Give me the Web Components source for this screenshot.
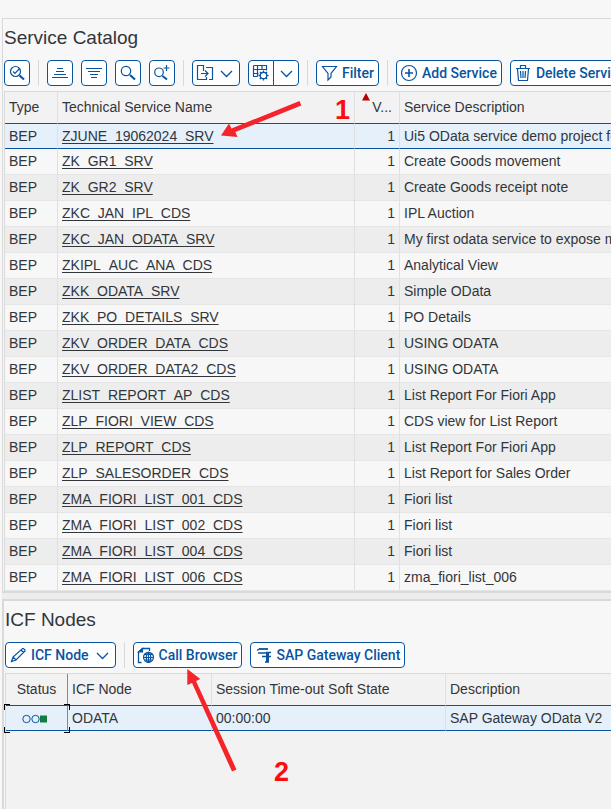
<!DOCTYPE html>
<html lang="en">
<head>
<meta charset="utf-8">
<title>Service Catalog</title>
<style>
html, body { margin: 0; height: 100%; }
body { font: 14px/20px "Liberation Sans", Arial, sans-serif; color: #32363a; background: #f7f7f7; overflow: hidden; }
</style>
</head>
<body>
<service-page></service-page>
<script>
const icons = {
  check: '<circle cx="11.5" cy="11.5" r="5"/><path d="M9 11.5l2 2 4.500-5"/><path stroke-width="2.2" d="M15.500 15.500l4.500 4"/>',
  asc: '<path d="M10 8.500h6M9 11.500h8M7 14.500h12M5 17.500h16"/>',
  desc: '<path d="M5 8.500h16M7 11.500h12M9 14.500h8M10 17.500h6"/>',
  find: '<circle cx="11" cy="11" r="4.700"/><path stroke-width="2.200" d="M15 15l5 4.500"/>',
  findmore: '<circle cx="10" cy="12.300" r="4.300"/><path stroke-width="2" d="M13.500 16l4.500 3.500"/><path d="M17.500 5v6M14.500 8h6"/>',
  export: '<path d="M11.500 8V5.500h-6v14h9V17M14 7.500h6.500v12H17M11.500 8v3M9 13.500h7M13 10.500l3 3-3 3"/>',
  grid: '<path d="M5.500 5.500h13v5M5.500 5.500v11h4M5.500 9.500h13M5.500 13.500h5M9.500 5.500v11M14 5.500v4"/><circle cx="15.500" cy="15.500" r="3.200"/><path stroke-width="1.400" d="M15.500 10.500v2M15.500 18.500v2M10.500 15.500h2M18.500 15.500h2M12 12l1.400 1.400M17.600 17.600L19 19M19 12l-1.400 1.400M13.400 17.600L12 19"/>',
  filter: '<path d="M6.500 6.500h14l-5.500 7v3.500l-3 3v-6.500z"/>',
  add: '<circle cx="13" cy="13" r="7.500"/><path stroke-width="1.600" d="M13 9v8M9 13h8"/>',
  trash: '<path d="M6 8.500h14M10.500 8V5.500h5V8M7.500 9l1 11.500h9l1-11.500M10.500 11l.5 7M13 11v7M15.500 11l-.5 7"/>',
  edit: '<path d="M6.500 19.500l1.500-4.500 9.500-8.500h1l1.500 1.500v1l-9 9zM8 15l3 3M16 8l2.500 2.500"/>',
  browser: '<path stroke-width="1.300" d="M8.500 20.500h-3V10l4-3.500h7V9"/><path fill="currentColor" d="M5.500 10l4-3.500v3.500z"/><circle cx="15.500" cy="15.300" r="5"/><ellipse cx="15.500" cy="15.300" rx="2.200" ry="5"/><path d="M10.500 15.500h10M11.500 12.500h8M11.500 18h8M15.500 10.500v10"/>',
  gateway: '<path stroke-width="1.800" d="M9 7h9"/><path stroke-width="1.400" d="M7 8.500l3-2M8 11h11M12 14.500h5M18 14.500h3"/><path stroke-width="3" d="M17.500 10v10"/><path stroke-width="1.400" d="M15 20h4M16 10.500h5"/>'
};

function define(name, css, html) {
  const t = document.createElement('template');
  customElements.define(name, class extends HTMLElement {
    connectedCallback() {
      if (this.shadowRoot) return;
      t.innerHTML = `<style>*{box-sizing:border-box}${css}</style>${typeof html === 'function' ? html(this) : html}`;
      this.attachShadow({ mode: 'open' }).append(t.content.cloneNode(true));
    }
  });
}

const chevron = '<svg class="chev" width="13" height="26" viewBox="0 0 13 26"><path d="M1 11l5.500 5.500L12 11"/></svg>';

define('tool-button', `
  :host { display: flex; flex: none; }
  button { display: flex; align-items: center; height: 26px; padding: 0; border: 1px solid #0854a0; border-radius: 4px;
    background: #fff; color: #0854a0; font: 500 14px/24px Roboto, sans-serif; white-space: nowrap; cursor: pointer; }
  svg { flex: none; fill: none; stroke: currentColor; stroke-width: 1.2; margin: -1px; }
  .text { padding: 0 4px 0 1px; }
  .menu { padding-right: 6px; }
  .chev { margin: -1px 0 -1px 3px; stroke-width: 1.3; }
  .first { border-radius: 4px 0 0 4px; }
  .second { border-radius: 0 4px 4px 0; margin-left: -1px; padding: 0 5px 0 3px; }`,
  el => {
    const label = el.getAttribute('label'), menu = el.getAttribute('menu');
    const svg = `<svg width="26" height="26" viewBox="0 0 26 26">${icons[el.getAttribute('icon')]}</svg>`;
    const main = `<button type="button" class="${menu === 'split' ? 'first' : menu ? 'menu' : ''}" aria-label="${label || el.getAttribute('name')}">${svg}${label ? `<span class="text">${label}</span>` : ''}${menu === 'inline' ? chevron : ''}</button>`;
    return main + (menu === 'split' ? `<button type="button" class="second" aria-label="Layouts">${chevron}</button>` : '');
  });

define('tool-separator', `:host { flex: none; width: 1px; height: 26px; background: #d9d9d9; }`, '');

define('tool-bar', `:host { display: flex; gap: 8px; overflow: hidden; }`, '<slot></slot>');

define('grid-panel', `
  :host { display: flex; flex-direction: column; border: 1px solid #d9d9d9; border-right: 0; background: #f7f7f7; padding-left: 1px; }
  h2 { margin: 0; padding: 6px 0 0; height: 41px; font-weight: 400; font-size: 19px; line-height: 26px; }
  ::slotted(data-grid) { margin-top: 5px; }`,
  el => `<h2>${el.getAttribute('heading')}</h2><slot></slot>`);

define('data-grid', `
  :host { display: block; border-top: 1px solid #d9d9d9; border-left: 1px solid #d9d9d9; background: #f2f2f2; }
  table { width: 100%; table-layout: fixed; border-collapse: separate; border-spacing: 0; }
  th, td { height: 26px; padding: 0 4px 2px; text-align: left; font-weight: 400; white-space: nowrap; overflow: hidden;
    border-right: 1px solid #e0e0e0; border-bottom: 1px solid #e5e5e5; line-height: 20px; }
  th { height: 32px; background: #f2f2f2; border-bottom: 1px solid #0854a0; }
  td { background: #f7f7f7; }
  tr:nth-child(odd) td { background: #ededed; }
  tr:first-child td { height: 25px; padding-bottom: 0; background: #e5f0fa; border-bottom-color: #0854a0; }
  tr:nth-child(even) td { background: #f7f7f7; }
  th:last-child, td:last-child { border-right: 0; }
  .num { text-align: right; }
  th.num { position: relative; padding-right: 7px; }
  th.num svg { position: absolute; left: 7px; top: 1px; }
  a { color: inherit; text-underline-offset: 2px; text-decoration-thickness: 1px; text-decoration-skip-ink: none; }
  .status { position: relative; overflow: visible; text-align: center; border-right-color: #888; }
  .status svg { display: block; }
  td.status { padding-left: 15px; }
  td.status .focus { position: absolute; left: -2px; top: -2px; width: calc(100% + 5px); height: calc(100% + 5px); }
  .focus i { position: absolute; width: 6px; height: 6px; border: 0 solid #000; }
  .focus i:nth-child(1) { left: 0; top: 0; border-width: 1px 0 0 1px; }
  .focus i:nth-child(2) { right: 0; top: 0; border-width: 1px 1px 0 0; }
  .focus i:nth-child(3) { left: 0; bottom: 0; border-width: 0 0 1px 1px; }
  .focus i:nth-child(4) { right: 0; bottom: 0; border-width: 0 1px 1px 0; }`,
  el => {
    const { columns, rows } = grids[el.getAttribute('source')];
    return `<table><colgroup>${columns.map(c => `<col${c.width ? ` style="width:${c.width}px"` : ''}>`).join('')}</colgroup>
      <thead><tr>${columns.map(c => `<th scope="col" class="${c.kind || ''}">${c.kind === 'num' ? '<svg width="8" height="8"><path d="M4 0l4 7.500H0z" fill="#b00"/></svg>' : ''}${c.title}</th>`).join('')}</tr></thead>
      <tbody>${rows.map(r => `<tr>${r.map((v, i) => `<td class="${columns[i].kind || ''}">${cell(v, columns[i].kind)}</td>`).join('')}</tr>`).join('')}</tbody></table>`;
  });

function cell(v, kind) {
  if (kind === 'link') return `<a href="#${v}">${v}</a>`;
  if (kind === 'status') return '<svg width="28" height="12" fill="none" stroke="#0854a0" role="img" aria-label="Active"><circle cx="5.500" cy="7" r="3.700"/><circle cx="14.500" cy="7" r="3.700"/><path d="M19 3.500h7v7h-7z" fill="#107e3e" stroke="none"/></svg><span class="focus"><i></i><i></i><i></i><i></i></span>';
  return v;
}

const grids = {
  services: {
    columns: [{ title: 'Type', width: 53 }, { title: 'Technical Service Name', width: 297, kind: 'link' }, { title: 'V...', width: 45, kind: 'num' }, { title: 'Service Description' }],
    rows: [
      ['ZJUNE_19062024_SRV', 'Ui5 OData service demo project for June'],
      ['ZK_GR1_SRV', 'Create Goods movement'],
      ['ZK_GR2_SRV', 'Create Goods receipt note'],
      ['ZKC_JAN_IPL_CDS', 'IPL Auction'],
      ['ZKC_JAN_ODATA_SRV', 'My first odata service to expose material'],
      ['ZKIPL_AUC_ANA_CDS', 'Analytical View'],
      ['ZKK_ODATA_SRV', 'Simple OData'],
      ['ZKK_PO_DETAILS_SRV', 'PO Details'],
      ['ZKV_ORDER_DATA_CDS', 'USING ODATA'],
      ['ZKV_ORDER_DATA2_CDS', 'USING ODATA'],
      ['ZLIST_REPORT_AP_CDS', 'List Report For Fiori App'],
      ['ZLP_FIORI_VIEW_CDS', 'CDS view for List Report'],
      ['ZLP_REPORT_CDS', 'List Report For Fiori App'],
      ['ZLP_SALESORDER_CDS', 'List Report for Sales Order'],
      ['ZMA_FIORI_LIST_001_CDS', 'Fiori list'],
      ['ZMA_FIORI_LIST_002_CDS', 'Fiori list'],
      ['ZMA_FIORI_LIST_004_CDS', 'Fiori list'],
      ['ZMA_FIORI_LIST_006_CDS', 'zma_fiori_list_006']
    ].map(([name, text]) => ['BEP', name, '1', text])
  },
  nodes: {
    columns: [{ title: 'Status', width: 62, kind: 'status' }, { title: 'ICF Node', width: 144 }, { title: 'Session Time-out Soft State', width: 234 }, { title: 'Description' }],
    rows: [['', 'ODATA', '00:00:00', 'SAP Gateway OData V2']]
  }
};

define('step-marks', `
  :host { position: absolute; inset: 0; pointer-events: none; }
  svg { position: absolute; left: 0; top: 0; width: 100%; height: 100%; fill: #f4242a; }
  b { position: absolute; font-size: 27px; line-height: 30px; color: #fb0d0d; }
  .one { left: 335px; top: 95px; }
  .two { left: 274px; top: 757px; }`,
  `<svg><path d="M299.500 101l1.800 4.500-66 26.500 2.200 5-16.500-1.500 8-12 2.500 5z"/><path d="M236.500 769.500l-4.500 2-40-88.500-4.700 2V669l13 10-4.300 2z"/></svg><b class="one">1</b><b class="two">2</b>`);

define('service-page', `
  :host { position: relative; display: flex; flex-direction: column; min-height: 100vh; padding: 18px 0 0 2px; overflow: hidden; box-sizing: border-box; }
  .services { border-bottom-width: 2px; box-shadow: 0 6px #ededed; }
  .nodes { flex: 1; margin-top: 6px; border-width: 2px 0 0 2px; padding-left: 1px; }
  .nodes data-grid { flex: 1; }`,
  `<grid-panel class="services" heading="Service Catalog">
    <tool-bar>
      <tool-button icon="check" name="Details"></tool-button><tool-separator></tool-separator>
      <tool-button icon="asc" name="Sort ascending"></tool-button>
      <tool-button icon="desc" name="Sort descending"></tool-button>
      <tool-button icon="find" name="Find"></tool-button>
      <tool-button icon="findmore" name="Find next"></tool-button><tool-separator></tool-separator>
      <tool-button icon="export" name="Export" menu="inline"></tool-button>
      <tool-button icon="grid" name="Choose layout" menu="split"></tool-button><tool-separator></tool-separator>
      <tool-button icon="filter" label="Filter"></tool-button><tool-separator></tool-separator>
      <tool-button icon="add" label="Add Service"></tool-button>
      <tool-button icon="trash" label="Delete Service"></tool-button>
    </tool-bar>
    <data-grid source="services"></data-grid>
  </grid-panel>
  <grid-panel class="nodes" heading="ICF Nodes">
    <tool-bar>
      <tool-button icon="edit" label="ICF Node" menu="inline"></tool-button><tool-separator></tool-separator>
      <tool-button icon="browser" label="Call Browser"></tool-button>
      <tool-button icon="gateway" label="SAP Gateway Client"></tool-button>
    </tool-bar>
    <data-grid source="nodes"></data-grid>
  </grid-panel>
  <step-marks></step-marks>`);
</script>
</body>
</html>
